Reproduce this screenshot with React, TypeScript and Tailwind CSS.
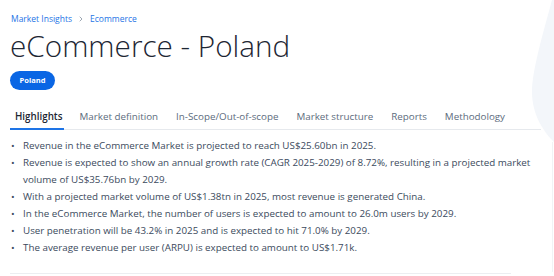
import { ChevronRight } from 'lucide-react';

export default function App() {
  const tabs = ['Highlights', 'Market definition', 'In-Scope/Out-of-scope', 'Market structure', 'Reports', 'Methodology'];

  const highlights = [
    'Revenue in the eCommerce Market is projected to reach US$25.60bn in 2025.',
    'Revenue is expected to show an annual growth rate (CAGR 2025-2029) of 8.72%, resulting in a projected market volume of US$35.76bn by 2029.',
    'With a projected market volume of US$1.38tn in 2025, most revenue is generated China.',
    'In the eCommerce Market, the number of users is expected to amount to 26.0m users by 2029.',
    'User penetration will be 43.2% in 2025 and is expected to hit 71.0% by 2029.',
    'The average revenue per user (ARPU) is expected to amount to US$1.71k.',
  ];

  return (
    <div className="relative w-[554px] h-[276px] overflow-hidden bg-white font-['Open_Sans',sans-serif]">
      {/* decorative shape on the right */}
      <svg className="absolute right-0 top-0" width="24" height="150" viewBox="0 0 24 150">
        <path d="M24 0 L22 0 C14 30 2 70 2 92 C2 115 14 132 24 142 Z" fill="#f3f6fa" />
      </svg>
      <div className="absolute right-[1px] top-[142px] h-[130px] w-px bg-[#f1f3f5]" />

      <div className="relative pl-[10px] pr-[13px] pt-[11px]">
        <div className="flex items-center pl-px text-[8.5px] leading-[16px] text-[#1e74e6]">
          <span>Market Insights</span>
          <ChevronRight className="mx-[5px] h-[8px] w-[8px] text-[#6b7a8c]" strokeWidth={2} />
          <span>Ecommerce</span>
        </div>

        <h1 className="text-[29.7px] leading-[38px] font-light text-[#1d2633]">
          eCommerce - Poland
        </h1>

        <div className="mt-[5px] inline-flex h-[19px] w-[45px] items-center justify-center rounded-full bg-[#0a66e4] text-[7.5px] font-bold text-white">
          Poland
        </div>

        <div className="mt-[20px] flex gap-[8px] border-b border-[#e6e9ed] text-[9.8px] leading-[14px]">
          {tabs.map((t, i) => (
            <div
              key={t}
              className={
                i === 0
                  ? 'mr-[3px] pl-[5px] pr-px pb-[4px] border-b-2 border-[#1e74e6] -mb-px text-[#1d2633] font-semibold'
                  : 'px-[5px] pb-[4px] text-[#5c6b7d]'
              }
            >
              {t}
            </div>
          ))}
        </div>

        <ul className="mt-[7px] text-[9.8px] leading-[17px] text-[#3b4a5d]">
          {highlights.map((h) => (
            <li key={h} className="flex">
              <span className="w-[13px] shrink-0 pl-[1px]">•</span>
              <span>{h}</span>
            </li>
          ))}
        </ul>
      </div>

      <div className="absolute bottom-[2px] left-[10px] h-px w-[501px] bg-[#eceef1]" />
    </div>
  );
}
